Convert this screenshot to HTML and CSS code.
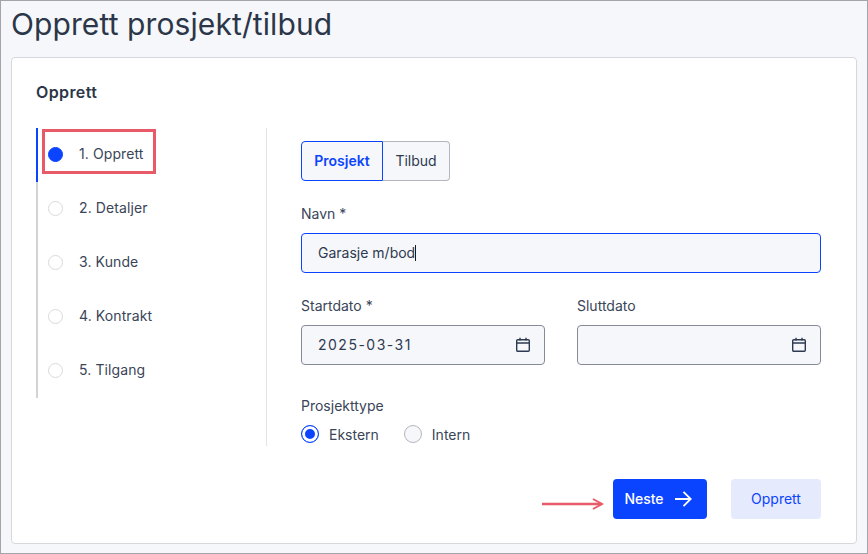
FILE: index.html
```html
<!DOCTYPE html>
<html lang="no">
<head>
<meta charset="utf-8">
<title>Opprett prosjekt/tilbud</title>
<link rel="stylesheet" href="styles.css">
</head>
<body>
<div class="frame">
  <h1 class="title">Opprett prosjekt/tilbud</h1>
  <main class="card">
    <h2 class="card-title">Opprett</h2>
    <div class="columns">
      <ol class="steps">
        <li class="step active"><span class="dot"></span><span class="step-text">1. Opprett</span><span class="mark-box"></span></li>
        <li class="step"><span class="dot"></span><span class="step-text">2. Detaljer</span></li>
        <li class="step"><span class="dot"></span><span class="step-text">3. Kunde</span></li>
        <li class="step"><span class="dot"></span><span class="step-text">4. Kontrakt</span></li>
        <li class="step"><span class="dot"></span><span class="step-text">5. Tilgang</span></li>
      </ol>
      <form class="form">
        <div class="toggle">
          <span class="toggle-btn on">Prosjekt</span>
          <span class="toggle-btn off">Tilbud</span>
        </div>
        <div class="field name-field">
          <span class="label">Navn *</span>
          <div class="input focus"><span class="value">Garasje m/bod</span><span class="caret"></span></div>
        </div>
        <div class="date-row">
          <div class="field">
            <span class="label">Startdato *</span>
            <div class="input"><span class="value date">2025-03-31</span>
              <svg class="cal" viewBox="0 0 16 16" fill="none" stroke="#2e3a50" stroke-width="1.4"><rect x="1.7" y="2.7" width="12.6" height="11.6" rx="1"/><path d="M1.7 6h12.6M5 .8v2.6M11 .8v2.6"/></svg>
            </div>
          </div>
          <div class="field">
            <span class="label">Sluttdato</span>
            <div class="input"><span></span>
              <svg class="cal" viewBox="0 0 16 16" fill="none" stroke="#2e3a50" stroke-width="1.4"><rect x="1.7" y="2.7" width="12.6" height="11.6" rx="1"/><path d="M1.7 6h12.6M5 .8v2.6M11 .8v2.6"/></svg>
            </div>
          </div>
        </div>
        <div class="type">
          <span class="label">Prosjekttype</span>
          <div class="radios">
            <span class="radio-item"><span class="radio checked"></span>Ekstern</span>
            <span class="radio-item"><span class="radio"></span>Intern</span>
          </div>
        </div>
      </form>
    </div>
    <div class="actions">
      <svg class="mark-arrow" viewBox="0 0 62 12" fill="none" stroke="#e85a68"><path d="M0 6h60" stroke-width="2.500"/><path d="M51 1l9 5-9 5" stroke-width="2"/></svg>
      <button type="button" class="btn primary"><span class="btn-text">Neste</span>
        <svg viewBox="0 0 18 18" width="18" height="18" fill="none" stroke="#fff" stroke-width="1.8"><path d="M1 9h15.500M9.500 1.800 16.700 9l-7.200 7.200"/></svg>
      </button>
      <button type="button" class="btn soft"><span class="btn-text">Opprett</span></button>
    </div>
  </main>
</div>
</body>
</html>
```
FILE: styles.css
```css
* { box-sizing: border-box; }
html, body { margin: 0; padding: 0; }
body {
  width: 868px;
  height: 554px;
  overflow: hidden;
  font-family: "Inter", "Noto Sans", sans-serif;
  color: #2e3a50;
}
.frame {
  width: 868px;
  height: 554px;
  background: #f6f7fb;
  border: 1px solid #a3a4aa;
  padding: 0 10px 9px 10px;
  display: flex;
  flex-direction: column;
}
.title {
  margin: 0;
  height: 56px;
  padding-top: 5px;
  font-size: 30px;
  line-height: 36px;
  font-weight: 400;
  letter-spacing: 0.1px;
  color: #2b3648;
}
.card {
  flex: 1;
  background: #fff;
  border: 1px solid #d7d8dc;
  border-radius: 4px;
  padding: 24px 35px 0 24px;
  display: flex;
  flex-direction: column;
}
.card-title {
  margin: 0;
  font-size: 16px;
  line-height: 20px;
  font-weight: 600;
  letter-spacing: 0.4px;
  color: #2b3648;
}
.columns {
  display: flex;
  margin-top: 26px;
}
.steps {
  list-style: none;
  margin: 0;
  padding: 0;
  width: 230px;
  height: 270px;
  border-left: 2px solid #d2d3d7;
  position: relative;
  flex: none;
}
.step {
  height: 54px;
  display: flex;
  align-items: center;
  gap: 16px;
  padding-left: 10px;
  font-size: 14px;
  letter-spacing: 0.1px;
  color: #3a4558;
  position: relative;
}
.step-text { margin-bottom: 3px; }
.step.active {
  border-left: 2px solid #0a44ff;
  margin-left: -2px;
  padding-left: 10px;
}
.dot {
  width: 15px;
  height: 15px;
  margin-bottom: 1px;
  border-radius: 50%;
  border: 1px solid #d9dadd;
  background: #fff;
  flex: none;
}
.active .dot { background: #0a44ff; border-color: #0a44ff; }
.mark-box {
  position: absolute;
  left: 4px;
  top: 1px;
  width: 114px;
  height: 45px;
  border: 3px solid #e85a68;
}
.form {
  width: 554px;
  height: 318px;
  border-left: 1px solid #e3e4e7;
  padding: 13px 0 0 34px;
  flex: none;
}
.toggle { display: flex; height: 40px; }
.toggle-btn {
  display: flex;
  align-items: center;
  justify-content: center;
  padding-bottom: 2px;
  font-size: 14px;
  background: #f6f7fb;
}
.toggle-btn.on {
  width: 82px;
  border: 1px solid #0a44ff;
  border-radius: 4px 0 0 4px;
  color: #0a44ff;
  font-weight: 600;
}
.toggle-btn.off {
  width: 67px;
  border: 1px solid #b4b6bd;
  border-left: none;
  border-radius: 0 4px 4px 0;
}
.field { display: flex; flex-direction: column; }
.name-field { margin-top: 23px; width: 520px; }
.label {
  display: block;
  font-size: 14px;
  line-height: 20px;
  color: #3a4558;
}
.input {
  margin-top: 9px;
  height: 40px;
  background: #f6f7fb;
  border: 1px solid #858a96;
  border-radius: 4px;
  padding: 0 13px 0 16px;
  display: flex;
  align-items: center;
  justify-content: space-between;
  font-size: 14px;
  color: #2e3a50;
}
.input.focus {
  border-color: #0a44ff;
  justify-content: flex-start;
}
.value { margin-bottom: 2px; }
.date { letter-spacing: 1.5px; }
.caret {
  width: 1px;
  height: 16px;
  background: #1a1a1a;
}
.cal { width: 16px; height: 16px; flex: none; }
.date-row {
  display: grid;
  grid-template-columns: 244px 244px;
  gap: 32px;
  margin-top: 23px;
  width: 520px;
}
.type { margin-top: 31px; }
.radios { display: flex; gap: 25px; margin-top: 5px; height: 26px; align-items: center; }
.radio-item { display: flex; align-items: center; gap: 10px; font-size: 14px; color: #3a4558; }
.radio {
  width: 18px;
  height: 18px;
  border-radius: 50%;
  border: 1px solid #b4b6bd;
  background: #f6f7fb;
  flex: none;
}
.radio.checked {
  border-color: #0a44ff;
  background: #0a44ff;
  box-shadow: inset 0 0 0 3px #fff;
}
.actions {
  display: flex;
  justify-content: flex-end;
  gap: 24px;
  margin-top: 33px;
  position: relative;
}
.mark-arrow {
  position: absolute;
  left: 506px;
  top: 19px;
  width: 62px;
  height: 12px;
}
.btn {
  height: 40px;
  border: none;
  border-radius: 4px;
  font-family: inherit;
  font-size: 14px;
  display: flex;
  align-items: center;
  justify-content: center;
}
.btn-text { margin-bottom: 2px; }
.btn.primary {
  width: 94px;
  gap: 10px;
  padding-right: 10px;
  background: #0a44ff;
  color: #fff;
  font-weight: 500;
}
.btn.soft {
  width: 90px;
  background: #e6eafd;
  color: #0a44ff;
}
```
